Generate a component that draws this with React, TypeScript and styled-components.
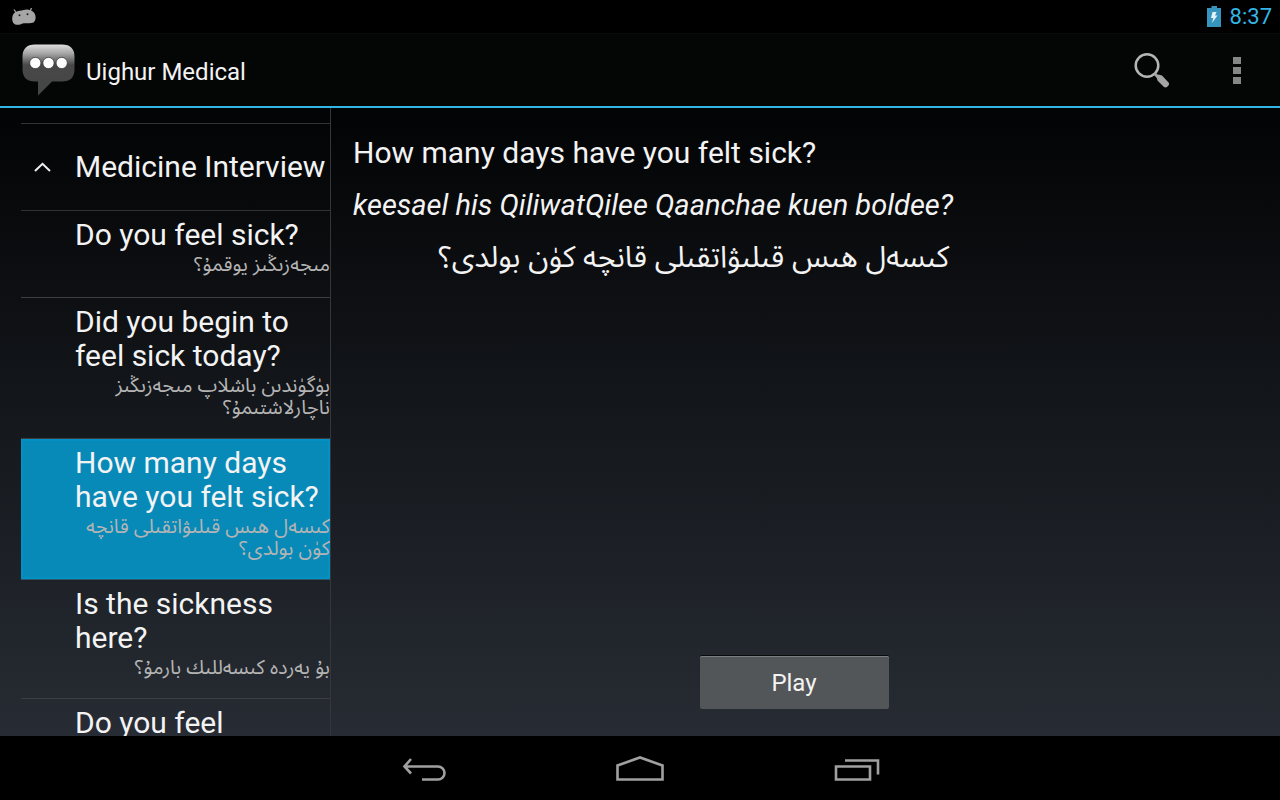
import React, { useState } from 'react';
import styled, { createGlobalStyle } from 'styled-components';

const latin = 'Roboto, "Liberation Sans", sans-serif';
const arabic = '"Noto Sans Arabic", "Noto Naskh Arabic", "Noto Sans", "DejaVu Sans", sans-serif';

const GlobalStyle = createGlobalStyle`
  * { box-sizing: border-box; }
  body {
    margin: 0;
    background: #000;
    color: #f3f3f3;
    font-family: ${latin};
  }
  button {
    border: 0;
    margin: 0;
    padding: 0;
    background: none;
    color: inherit;
    font: inherit;
    cursor: pointer;
  }
  h1, h2, p, ul { margin: 0; padding: 0; font-weight: 400; }
  svg { display: block; }
`;

const Screen = styled.div`
  display: flex;
  flex-direction: column;
  height: 100vh;
  overflow: hidden;
  background: linear-gradient(#000 0%, #020304 13%, #272c34 92%);
`;

const StatusBar = styled.div`
  flex: none;
  display: flex;
  align-items: center;
  justify-content: space-between;
  height: 33px;
  padding: 0 8px 0 12px;
  background: #000;
`;

const StatusInfo = styled.div`
  display: flex;
  align-items: center;
  gap: 8px;
  color: #33b5e5;
  font-size: 22px;
  line-height: 34px;
`;

const ActionBar = styled.header`
  flex: none;
  display: flex;
  align-items: center;
  height: 75px;
  padding: 0 4px 0 21px;
  background: #040505;
  border-top: 1px solid #0a0a0a;
  border-bottom: 2px solid #33b5e5;
`;

const AppTitle = styled.h1`
  flex: 1;
  padding: 4px 0 0 10px;
  font-size: 24px;
  line-height: 28px;
`;

const IconButton = styled.button<{ $width: number }>`
  display: flex;
  align-items: center;
  justify-content: center;
  width: ${(p) => p.$width}px;
  height: 100%;
`;

const Content = styled.main`
  flex: 1;
  min-height: 0;
  display: grid;
  grid-template-columns: minmax(0, 1fr) minmax(0, 3fr);
  padding: 0 23px 0 21px;
`;

const PhraseList = styled.nav`
  min-height: 0;
  overflow: hidden;
  padding-top: 15px;
`;

const GroupHeader = styled.button`
  display: flex;
  align-items: center;
  width: 100%;
  height: 88px;
  border-top: 1px solid #303234;
  border-bottom: 1px solid #303234;
  font-size: 30px;
  line-height: 34px;
  white-space: nowrap;
`;

const Expander = styled.span`
  flex: none;
  width: 54px;
  padding-left: 13px;
`;

const PhraseItems = styled.ul`
  list-style: none;
`;

const PhraseRow = styled.button<{ $selected: boolean }>`
  display: flex;
  flex-direction: column;
  justify-content: flex-start;
  width: 100%;
  min-height: 87px;
  padding: 7px 0 19px 54px;
  border-bottom: 1px solid ${(p) => (p.$selected ? '#2d5566' : '#3c3f42')};
  background: ${(p) => (p.$selected ? '#078ab8' : 'none')};
  box-shadow: ${(p) => (p.$selected ? 'inset 0 0 0 2px #0290c5' : 'none')};
  text-align: left;
`;

const PhraseText = styled.span`
  font-size: 30px;
  line-height: 34px;
`;

const PhraseTranslation = styled.span`
  align-self: stretch;
  padding-top: 2px;
  color: #b4b4b4;
  font-family: ${arabic};
  font-size: 20px;
  line-height: 22px;
  text-align: right;
`;

const Detail = styled.section`
  display: flex;
  flex-direction: column;
  justify-content: space-between;
  align-items: center;
  padding: 24px 0 27px;
  border-left: 1px solid #34373a;
`;

const Translations = styled.div`
  align-self: flex-start;
  width: fit-content;
  padding-left: 22px;
`;

const SourceLine = styled.p`
  padding: 4px 0 14px;
  font-size: 30px;
  line-height: 34px;
`;

const RomanizedLine = styled(SourceLine)`
  font-size: 29px;
  font-style: italic;
`;

const NativeLine = styled.p`
  padding-right: 4px;
  font-family: ${arabic};
  font-size: 30px;
  line-height: 44px;
  text-align: right;
`;

const PlayButton = styled.button`
  width: 189px;
  height: 53px;
  border-radius: 2px;
  background: #535658;
  box-shadow: inset 0 1px 0 #7c7e80, 0 -1px 0 #0a0b0c;
  font-size: 24px;
  line-height: 28px;
`;

const NavBar = styled.footer`
  flex: none;
  display: flex;
  justify-content: center;
  height: 64px;
  background: #000;
`;

const phrases = [
  { text: 'Do you feel sick?', native: 'مىجەزىڭىز يوقمۇ؟' },
  { text: 'Did you begin to feel sick today?', native: 'بۈگۈندىن باشلاپ مىجەزىڭىز ناچارلاشتىمۇ؟' },
  { text: 'How many days have you felt sick?', native: 'كىسەل ھىس قىلىۋاتقىلى قانچە كۈن بولدى؟' },
  { text: 'Is the sickness here?', native: 'بۇ يەردە كىسەللىك بارمۇ؟' },
  { text: 'Do you feel', native: '' },
];

const BeanIcon = () => (
  <svg width="24" height="18" viewBox="0 0 24 18" aria-hidden="true">
    <path d="M2 1.500 4 4.500M19.500 0 18 3.500" stroke="#a6a6a6" strokeWidth="1.300" />
    <path d="M3.500 4C6 2.500 9 2.800 11.500 2 15 .8 19 1.500 21.500 4 24.300 7 24.300 12 21.500 14.500 18 16 14 14.500 10.500 15.500 8 17 3.500 17.800 1.300 15 -.7 12 0 6 3.500 4Z" fill="#a6a6a6" />
    <circle cx="7.500" cy="7.300" r="1" fill="#222" />
    <circle cx="15.500" cy="6.300" r="1" fill="#222" />
  </svg>
);

const BatteryIcon = () => (
  <svg width="15" height="22" viewBox="0 0 15 22" aria-hidden="true">
    <path d="M4.500 0h5.500v2h4v19H0V2h4.500Z" fill="#3795bd" />
    <path d="M5.500 6h4L8 9.500H10.500L5 17 6.300 12H4Z" fill="#e4f1f7" />
  </svg>
);

const SpeechLogo = () => (
  <svg width="55" height="54" viewBox="0 0 55 54" aria-hidden="true">
    <defs>
      <linearGradient id="bubble" x1="0" y1="0" x2="0" y2="1">
        <stop offset="0" stopColor="#dedede" />
        <stop offset=".18" stopColor="#a4a4a4" />
        <stop offset=".4" stopColor="#484848" />
        <stop offset="1" stopColor="#454545" />
      </linearGradient>
    </defs>
    <path d="M14 1.500h27Q53.500 1.500 53.500 14V26Q53.500 38.500 41 38.500H31L17 52.500V38.500H14Q1.500 38.500 1.500 26V14Q1.500 1.500 14 1.500Z" fill="url(#bubble)" />
    <g fill="#fff" stroke="#222" strokeWidth=".6">
      <circle cx="14.300" cy="20" r="5.600" />
      <circle cx="27.500" cy="20" r="5.600" />
      <circle cx="40.700" cy="20" r="5.600" />
    </g>
  </svg>
);

const SearchIcon = () => (
  <svg width="36" height="36" viewBox="0 0 36 36" aria-hidden="true">
    <circle cx="13" cy="13.500" r="11.300" fill="none" stroke="#b5b5b5" strokeWidth="2.500" />
    <path d="M20.500 21.500 24 25" stroke="#a5a5a5" strokeWidth="3" />
    <path d="M22.500 25 24.500 22.500 28 23.500 35 31Q35.500 33 33.500 34.500 32 36 30 35L23.500 28.500Z" fill="#a5a5a5" />
  </svg>
);

const OverflowIcon = () => (
  <svg width="8" height="27" viewBox="0 0 8 27" fill="#868686" aria-hidden="true">
    <path d="M0 0h8v7H0ZM0 10h8v7H0ZM0 20h8v7H0Z" />
  </svg>
);

const navIcons = [
  { name: 'Back', d: 'M15 23 8.500 30.500l6.500 7M8.500 30.500H42A6.500 6.500 0 0 1 42 43.500H26' },
  { name: 'Home', d: 'M5.500 43.500V29.500L28 21.500 50.500 29.500V43.500Z' },
  { name: 'Recent apps', d: 'M8 30.500H42V43.500H8ZM17 24.500H50V38.500' },
];

export default function App() {
  const [selected, setSelected] = useState(2);
  return (
    <>
      <GlobalStyle />
      <Screen>
        <StatusBar>
          <BeanIcon />
          <StatusInfo>
            <BatteryIcon />
            <span>8:37</span>
          </StatusInfo>
        </StatusBar>
        <ActionBar>
          <SpeechLogo />
          <AppTitle>Uighur Medical</AppTitle>
          <IconButton $width={92} aria-label="Search"><SearchIcon /></IconButton>
          <IconButton $width={78} aria-label="More options"><OverflowIcon /></IconButton>
        </ActionBar>
        <Content>
          <PhraseList>
            <GroupHeader aria-expanded="true">
              <Expander>
                <svg width="17" height="10" viewBox="0 0 17 10" aria-hidden="true">
                  <path d="M1 9 8.500 1.800 16 9" fill="none" stroke="#f0f0f0" strokeWidth="2" />
                </svg>
              </Expander>
              Medicine Interview
            </GroupHeader>
            <PhraseItems>
              {phrases.map((phrase, i) => (
                <li key={phrase.text}>
                  <PhraseRow $selected={i === selected} onClick={() => setSelected(i)}>
                    <PhraseText>{phrase.text}</PhraseText>
                    {phrase.native && (
                      <PhraseTranslation dir="rtl" lang="ug">{phrase.native}</PhraseTranslation>
                    )}
                  </PhraseRow>
                </li>
              ))}
            </PhraseItems>
          </PhraseList>
          <Detail>
            <Translations>
              <SourceLine>How many days have you felt sick?</SourceLine>
              <RomanizedLine>keesael his QiliwatQilee Qaanchae kuen boldee?</RomanizedLine>
              <NativeLine dir="rtl" lang="ug">كىسەل ھىس قىلىۋاتقىلى قانچە كۈن بولدى؟</NativeLine>
            </Translations>
            <PlayButton>Play</PlayButton>
          </Detail>
        </Content>
        <NavBar>
          {navIcons.map((icon) => (
            <IconButton key={icon.name} $width={216} aria-label={icon.name}>
              <svg width="56" height="64" viewBox="0 0 56 64" fill="none" stroke="#a0a0a0" strokeWidth="2.600" aria-hidden="true">
                <path d={icon.d} />
              </svg>
            </IconButton>
          ))}
        </NavBar>
      </Screen>
    </>
  );
}
